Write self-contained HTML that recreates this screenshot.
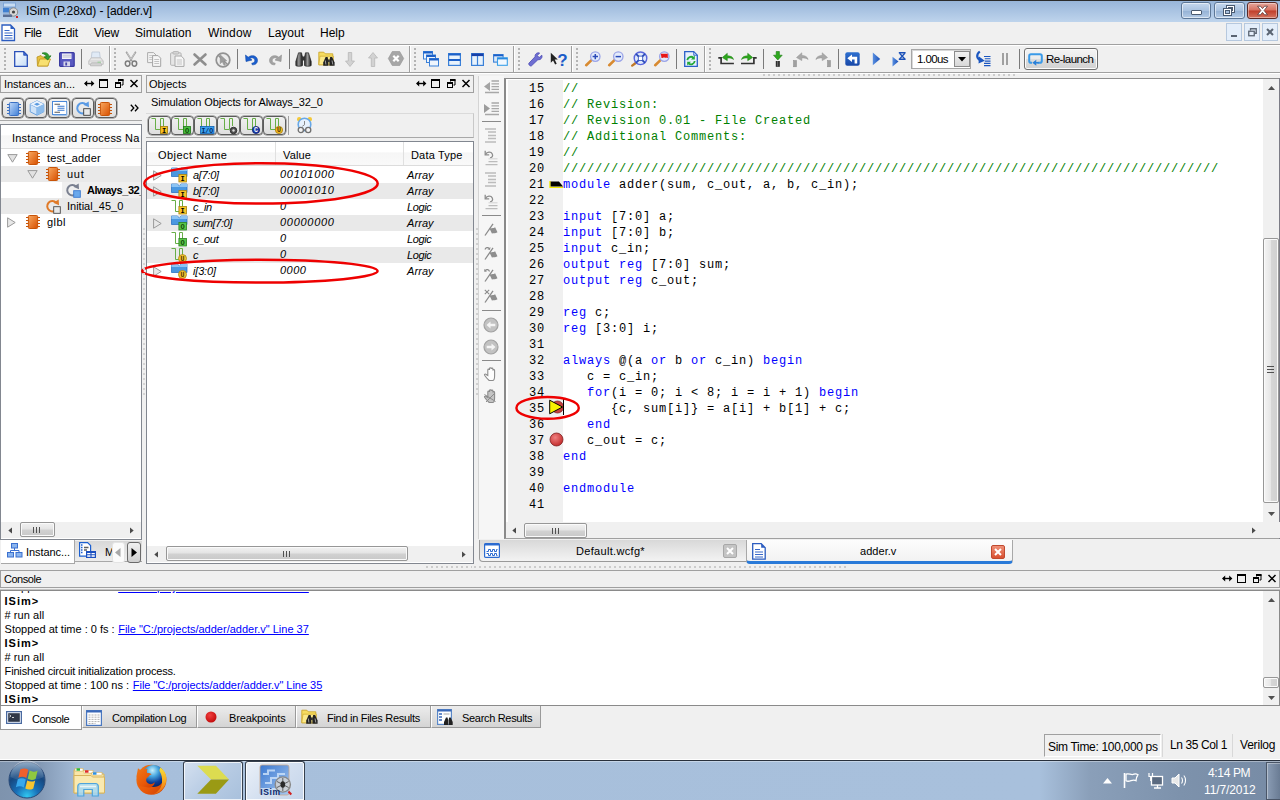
<!DOCTYPE html>
<html><head><meta charset="utf-8"><title>ISim (P.28xd) - [adder.v]</title>
<style>
*{box-sizing:border-box;margin:0;padding:0}
html,body{width:1280px;height:800px;overflow:hidden}
body{position:relative;background:#f0f0f0;font-family:"Liberation Sans",sans-serif;font-size:11px;color:#000}
.a{position:absolute}
.t{position:absolute;white-space:nowrap;line-height:14px;height:14px;font-size:11px}
svg{position:absolute;overflow:visible}
.menu{font-size:12px;top:26px}
.box{position:absolute;border:1px solid #a0a0a0}
.sep{position:absolute;width:1px;height:20px;top:49px;background:#7a7a7a}
.grip{position:absolute;top:48px;width:2px;height:22px;background:repeating-linear-gradient(#b4b4b4 0,#b4b4b4 2px,transparent 2px,transparent 4px)}
.tbend{position:absolute;top:46px;height:26px;width:2px;border-left:1px solid #a0a0a0;border-right:1px solid #fff}
.tb{position:absolute;border:1px solid #5c5c5c;border-radius:4px;background:linear-gradient(#f0f0f0,#e8e8e8 50%,#dedede);box-shadow:0 0 0 .5px #777}
.code{font-family:"Liberation Mono",monospace;font-size:12px;letter-spacing:.8px;line-height:16px;height:16px;white-space:pre;position:absolute;color:#000}
.k{color:#0000ff}.c{color:#008000}
.it{font-style:italic}
.lnk{color:#0000ff;text-decoration:underline}
.b{font-weight:bold}
</style></head><body>

<!-- 10_title.html -->
<div class="a" style="left:0;top:0;width:1280px;height:22px;background:linear-gradient(#98b5d9 0,#a9c3e2 45%,#bed4ec 100%);border-top:1px solid #2b2b2b"></div>
<svg style="left:2px;top:2px" width="17" height="17" viewBox="0 0 17 17"><rect x="1" y="0.5" width="13" height="11" fill="#7fa6d8"/><rect x="2" y="1.5" width="11" height="3" fill="#c8dcf2"/><rect x="1" y="6" width="6" height="4" fill="#3f7fd0"/><circle cx="11.5" cy="10" r="4.2" fill="#d8d8d8" stroke="#8a8a8a"/><circle cx="11.5" cy="10" r="1.6" fill="#444"/><rect x="1" y="12.5" width="9" height="2.5" fill="#5a6f95"/><rect x="14" y="14" width="2" height="2" fill="#d02020"/></svg>
<div class="t" style="letter-spacing:-0.07px;left:26px;top:4px;font-size:12px">ISim (P.28xd) - [adder.v]</div>
<!-- window buttons -->
<div class="a" style="left:1181px;top:2px;width:30px;height:17px;border:1px solid #5d7797;border-radius:3px;background:linear-gradient(#c6d8ee,#a9c2e0 50%,#94b1d4 51%,#b4cbe6);box-shadow:inset 0 0 0 1px rgba(255,255,255,.55)"></div>
<div class="a" style="left:1191px;top:10px;width:11px;height:5px;background:#fff;border:1px solid #4a5a70;border-radius:1px"></div>
<div class="a" style="left:1214px;top:2px;width:31px;height:17px;border:1px solid #5d7797;border-radius:3px;background:linear-gradient(#c6d8ee,#a9c2e0 50%,#94b1d4 51%,#b4cbe6);box-shadow:inset 0 0 0 1px rgba(255,255,255,.55)"></div>
<svg style="left:1223px;top:5px" width="13" height="11" viewBox="0 0 13 11"><rect x="3.5" y="0.5" width="8" height="7" fill="#fff" stroke="#4a5a70"/><rect x="5.5" y="2.5" width="4" height="3" fill="#a9c2e0" stroke="#4a5a70"/><rect x="0.5" y="3.5" width="8" height="7" fill="#fff" stroke="#4a5a70"/><rect x="2.5" y="5.5" width="4" height="3" fill="#a9c2e0" stroke="#4a5a70"/></svg>
<div class="a" style="left:1247px;top:2px;width:31px;height:17px;border:1px solid #5b2a26;border-radius:3px;background:linear-gradient(#e5a79c,#d6705f 48%,#c03e2a 52%,#d5745f);box-shadow:inset 0 0 0 1px rgba(255,255,255,.4)"></div>
<svg style="left:1256px;top:5px" width="13" height="11" viewBox="0 0 13 11"><path d="M1.5 1.2h3l2 2.4 2-2.4h3l-3.4 4.3 3.4 4.3h-3l-2-2.4-2 2.4h-3l3.4-4.3z" fill="#fff" stroke="#5b3a3a" stroke-width=".8"/></svg>

<!-- menubar -->
<div class="a" style="left:0;top:22px;width:1280px;height:22px;background:#f0f0f0"></div>
<svg style="left:1px;top:24px" width="15" height="18" viewBox="0 0 15 18"><path d="M1 1h8.5l4 4v11.5H1z" fill="#fff" stroke="#2b5cc0" stroke-width="1.3"/><path d="M9.5 1v4h4z" fill="#2b5cc0"/><path d="M3.5 6.5h5M3.5 9h8M3.5 11.5h8M3.5 14h8" stroke="#3868c8" stroke-width="1.2"/></svg>
<div class="t menu" style="letter-spacing:-0.46px;left:24px">File</div>
<div class="t menu" style="letter-spacing:-0.22px;left:58px">Edit</div>
<div class="t menu" style="letter-spacing:-0.20px;left:94px">View</div>
<div class="t menu" style="letter-spacing:0.05px;left:135px">Simulation</div>
<div class="t menu" style="letter-spacing:0.14px;left:208px">Window</div>
<div class="t menu" style="left:268px">Layout</div>
<div class="t menu" style="left:320px">Help</div>
<!-- mdi buttons -->
<div class="a" style="left:1226px;top:23px;width:16px;height:18px;background:#e4eefa;border:1px solid #b6c8de"></div>
<div class="a" style="left:1231px;top:35px;width:6px;height:2px;background:#5a6472"></div>
<div class="a" style="left:1244px;top:23px;width:16px;height:18px;background:#e4eefa;border:1px solid #b6c8de"></div>
<svg style="left:1248px;top:28px" width="9" height="9" viewBox="0 0 9 9"><path d="M2.5 2.5V.75h5.75v4.5H6.5" fill="none" stroke="#5a6472" stroke-width="1.3"/><rect x=".75" y="3.25" width="5.5" height="4.5" fill="none" stroke="#5a6472" stroke-width="1.3"/></svg>
<div class="a" style="left:1262px;top:23px;width:16px;height:18px;background:#e4eefa;border:1px solid #b6c8de"></div>
<svg style="left:1266px;top:28px" width="8" height="8" viewBox="0 0 8 8"><path d="M1 1l6 6M7 1l-6 6" stroke="#5a6472" stroke-width="2"/></svg>
<div class="a" style="left:0;top:44px;width:1280px;height:1px;background:#a0a0a0"></div>
<div class="a" style="left:0;top:45px;width:1280px;height:1px;background:#fff"></div>

<!-- 20_toolbar.html -->
<!-- toolbar frame -->
<div class="a" style="left:0;top:72px;width:1280px;height:1px;background:#a0a0a0"></div>
<div class="a" style="left:0;top:73px;width:1280px;height:1px;background:#fff"></div>
<div class="grip" style="left:4px"></div>
<div class="tbend" style="left:109px"></div>
<div class="grip" style="left:114px"></div>
<div class="tbend" style="left:409px"></div>
<div class="grip" style="left:414px"></div>
<div class="tbend" style="left:513px"></div>
<div class="grip" style="left:518px"></div>
<div class="tbend" style="left:571px"></div>
<div class="grip" style="left:576px"></div>
<div class="tbend" style="left:704px"></div>
<div class="grip" style="left:709px"></div>
<div class="sep" style="left:81px"></div>
<div class="sep" style="left:237px"></div>
<div class="sep" style="left:289px"></div>
<div class="sep" style="left:676px"></div>
<div class="sep" style="left:763px"></div>
<div class="sep" style="left:838px"></div>
<div class="sep" style="left:1019px"></div>

<!-- new -->
<svg style="left:14px;top:51px" width="14" height="16" viewBox="0 0 14 16"><defs><linearGradient id="gnew" x1="0" y1="0" x2="1" y2="1"><stop offset="0" stop-color="#fff"/><stop offset="1" stop-color="#c4dcf6"/></linearGradient></defs><path d="M.7.7h9l3.6 3.6v11H.7z" fill="url(#gnew)" stroke="#2a50b8" stroke-width="1.3"/><path d="M9.7.7v3.6h3.6z" fill="#3a66d0" stroke="#2a50b8" stroke-width=".8"/></svg>
<!-- open -->
<svg style="left:36px;top:51px" width="16" height="16" viewBox="0 0 16 16"><path d="M1 6l4-1.5 1.5 1.5h5.5v9H1.5z" fill="#e8c040" stroke="#b8901c" stroke-width=".8"/><path d="M1.5 15l2.3-7h10.7l-2.8 7z" fill="#f8e070" stroke="#c09820" stroke-width=".8"/><path d="M6 2.2c4-1.4 6.5.3 6.8 3l2.2-.4-3.2 4.2-3.6-3 2.2-.4c-.3-1.600-2-2.600-4.400-3.400z" fill="#30a030" stroke="#187018" stroke-width=".7"/></svg>
<!-- save -->
<svg style="left:59px;top:52px" width="16" height="15" viewBox="0 0 16 15"><rect x=".6" y=".6" width="14.600" height="13.800" rx="1" fill="#5858c0" stroke="#3a3aa0" stroke-width="1.2"/><rect x="3" y="1.500" width="9.500" height="5.500" fill="#f4f4fa"/><path d="M3.500 3.200h8.500M3.500 5h8.500" stroke="#b0b0c8" stroke-width=".8"/><rect x="4.500" y="9.500" width="6.500" height="4.800" fill="#d8d8ec"/><rect x="6.300" y="10.500" width="1.800" height="3" fill="#4848a8"/></svg>
<!-- print (disabled) -->
<svg style="left:88px;top:51px" width="16" height="16" viewBox="0 0 16 16" opacity=".75"><path d="M4 1h7.500l.8 6.500H3.200z" fill="#dbe9f8" stroke="#a8b8cc" stroke-width=".8"/><path d="M.8 10l2.500-3.200h9.400l2.500 3.200v3.300H.8z" fill="#e4e4e4" stroke="#a4a4a4" stroke-width=".8"/><path d="M.8 10h14.400" stroke="#bcbcbc" stroke-width=".8"/><path d="M2.500 13.300l1-1.500h9l1 1.500v1.500h-11z" fill="#c8c8c8" stroke="#9c9c9c" stroke-width=".7"/><path d="M9.500 11.200h3.500" stroke="#7ec27e" stroke-width="1.100"/></svg>

<!-- cut -->
<svg style="left:124px;top:51px" width="14" height="16" viewBox="0 0 14 16"><path d="M2.200.8L8 10M11.800.8L6 10" stroke="#9a9a9a" stroke-width="1.600" fill="none"/><path d="M3 1.500L7 8.500 11 1.500" stroke="#d8d8d8" stroke-width=".7" fill="none"/><ellipse cx="3.600" cy="12.600" rx="2.300" ry="2.600" fill="none" stroke="#7c7c7c" stroke-width="1.500"/><ellipse cx="10.400" cy="12.600" rx="2.300" ry="2.600" fill="none" stroke="#7c7c7c" stroke-width="1.500"/></svg>
<!-- copy -->
<svg style="left:147px;top:52px" width="15" height="15" viewBox="0 0 15 15"><path d="M.6.600h6l2.400 2.400v7.600H.6z" fill="#f2f2f2" stroke="#adadad" stroke-width="1"/><path d="M2.200 3.500h4M2.200 5.500h5M2.200 7.500h5" stroke="#c4c4c4" stroke-width=".9"/><path d="M5.600 3.600h5.500l2.600 2.600v8.200H5.600z" fill="#f6f6f6" stroke="#a4a4a4" stroke-width="1"/><path d="M7.300 7.500h4.800M7.300 9.500h4.800M7.300 11.500h4.800" stroke="#bcbcbc" stroke-width=".9"/></svg>
<!-- paste -->
<svg style="left:170px;top:51px" width="15" height="16" viewBox="0 0 15 16"><rect x=".6" y="1.800" width="10.500" height="12.500" rx="1" fill="#e6e6e6" stroke="#b4b4b4"/><rect x="3" y=".5" width="5.600" height="2.600" rx=".8" fill="#d4d4d4" stroke="#b0b0b0" stroke-width=".8"/><path d="M5 5h6.200l2.800 2.800v7.600H5z" fill="#f6f6f6" stroke="#a8a8a8" stroke-width="1"/><path d="M6.800 9h5.200M6.800 11h5.200M6.800 13h5.200" stroke="#bebebe" stroke-width=".9"/></svg>
<!-- delete X -->
<svg style="left:193px;top:53px" width="14" height="13" viewBox="0 0 14 13"><path d="M1.500 1.500L12.500 11.500M12.500 1.500L1.500 11.500" stroke="#8e8e8e" stroke-width="2.600" stroke-linecap="round"/></svg>
<!-- stop pointer -->
<svg style="left:215px;top:52px" width="16" height="16" viewBox="0 0 16 16"><circle cx="8" cy="8" r="6.800" fill="#ececec" stroke="#929292" stroke-width="1.700"/><path d="M3.200 3.200l9.600 9.600" stroke="#929292" stroke-width="1.500"/><path d="M5.200 2.800l6.600 6-3 .2 1.700 3.600-1.500.7-1.700-3.600-2.100 2z" fill="#9c9c9c" stroke="#8a8a8a" stroke-width=".5"/></svg>
<!-- undo -->
<svg style="left:245px;top:54px" width="14" height="11" viewBox="0 0 14 11"><path d="M.5 1l.5 6.500 6-1.500-2.200-1.400c1.800-1.500 4.600-.9 5 1.300.4 2-1.200 3.300-3 3.300l.4 1.600c3.500.3 5.800-2.300 5.200-5.300C11.700 1.800 7 .3 3.200 3.200z" fill="#1a5fd0" stroke="#1048a8" stroke-width=".6"/></svg>
<!-- redo -->
<svg style="left:268px;top:54px" width="14" height="11" viewBox="0 0 14 11"><path d="M13.500 1l-.5 6.500-6-1.500 2.200-1.400c-1.800-1.500-4.600-.9-5 1.300-.4 2 1.200 3.300 3 3.300l-.4 1.600c-3.500.3-5.800-2.300-5.200-5.300C2.300 1.800 7 .3 10.800 3.200z" fill="#a2a2a2" stroke="#8e8e8e" stroke-width=".6"/></svg>
<!-- binoculars -->
<svg style="left:295px;top:52px" width="17" height="15" viewBox="0 0 17 15"><defs><linearGradient id="gbin" x1="0" y1="0" x2="1" y2="0"><stop offset="0" stop-color="#222"/><stop offset=".45" stop-color="#999"/><stop offset="1" stop-color="#111"/></linearGradient></defs><path d="M3.500.8h3l1 4.500v8.200c0 1-6.700 1-6.700 0v-4z" fill="url(#gbin)" stroke="#111" stroke-width=".6"/><path d="M13.500.8h-3l-1 4.500v8.200c0 1 6.700 1 6.700 0v-4z" fill="url(#gbin)" stroke="#111" stroke-width=".6"/><rect x="6.800" y="4.500" width="3.400" height="4" fill="#333"/></svg>
<!-- folder binoculars -->
<svg style="left:318px;top:51px" width="17" height="16" viewBox="0 0 17 16"><path d="M.8 1.200h5l1.500 1.600h7.500v11H.8z" fill="#f6dc60" stroke="#c8a020" stroke-width=".8"/><path d="M.8 13.800l1.200-8.600h13.600l-.8 8.600z" fill="#fbe98a" stroke="#c8a020" stroke-width=".6"/><path d="M7.600 6h2l.8 3.500v5.300H5.200v-3.300z" fill="#222"/><path d="M14.200 6h-2l-.8 3.500v5.300h5.200v-3.300z" fill="#222"/><path d="M7.300 9.500l.6 4M14 9.500l.8 4" stroke="#aaa" stroke-width=".9"/><rect x="9.800" y="8.500" width="2" height="2.500" fill="#333"/></svg>
<!-- down arrow (disabled) -->
<svg style="left:345px;top:52px" width="10" height="15" viewBox="0 0 10 15"><path d="M3.300.5h3.400v8.500h2.800L5 14.500.5 9h2.800z" fill="#d2d2d2" stroke="#b8b8b8" stroke-width=".8"/></svg>
<!-- up arrow (disabled) -->
<svg style="left:368px;top:52px" width="10" height="15" viewBox="0 0 10 15"><path d="M3.300 14.500h3.400V6h2.800L5 .5.500 6h2.800z" fill="#d2d2d2" stroke="#b8b8b8" stroke-width=".8"/></svg>
<!-- hex X -->
<svg style="left:388px;top:51px" width="16" height="15" viewBox="0 0 16 15"><path d="M4.300.5h7.400l4 7-4 7H4.300l-4-7z" fill="#a6a6a6" stroke="#929292" stroke-width=".6"/><path d="M5.300 4.800l5.400 5.400M10.700 4.800l-5.400 5.400" stroke="#fff" stroke-width="2.200"/></svg>

<!-- cascade -->
<svg style="left:423px;top:51px" width="16" height="16" viewBox="0 0 16 16"><g fill="#eef5fd" stroke="#3a80d8" stroke-width="1"><rect x=".5" y=".5" width="9" height="7.500"/><rect x="3.500" y="4" width="9" height="7.500"/><rect x="6.500" y="7.500" width="9" height="7.500"/></g><path d="M.5 1.500h9M3.500 5h9M6.500 8.500h9" stroke="#1c60c8" stroke-width="2"/></svg>
<!-- tile horiz -->
<svg style="left:448px;top:53px" width="13" height="13" viewBox="0 0 13 13"><rect x=".6" y=".6" width="11.800" height="11.800" fill="#e8f2fc" stroke="#3a80d8" stroke-width="1.200"/><path d="M.6 1.500h11.800M.6 7h11.800" stroke="#1c60c8" stroke-width="2"/></svg>
<!-- tile vert -->
<svg style="left:471px;top:53px" width="13" height="13" viewBox="0 0 13 13"><rect x=".6" y=".6" width="11.800" height="11.800" fill="#e8f2fc" stroke="#3a80d8" stroke-width="1.200"/><path d="M.6 1.800h11.800" stroke="#1840a8" stroke-width="2.600"/><path d="M6.500 3v9.500" stroke="#3a80d8" stroke-width="1.200"/></svg>
<!-- overlap -->
<svg style="left:493px;top:54px" width="15" height="12" viewBox="0 0 15 12"><rect x=".6" y=".6" width="9.500" height="7.500" fill="#dce9f8" stroke="#3a80d8" stroke-width="1.100"/><path d="M.6 1.400h9.500" stroke="#1c60c8" stroke-width="1.800"/><rect x="4.500" y="3.800" width="9.800" height="7.500" fill="#f2f8fe" stroke="#3aa0e8" stroke-width="1.100"/><path d="M4.500 4.600h9.800" stroke="#2a88e0" stroke-width="1.600"/></svg>
<!-- wrench -->
<svg style="left:528px;top:52px" width="15" height="15" viewBox="0 0 15 15"><path d="M13.800 3.200l-2.600 2.300-1.900-1.900 2.300-2.600c-2.200-.8-4.800.8-4.600 3.800L.9 11.200c-.9 1 1.500 3.600 2.600 2.600L9.900 7.700c3 .4 4.800-2.200 3.900-4.500z" fill="#6f6fd2" stroke="#4a4ab4" stroke-width=".8"/></svg>
<!-- arrow ? -->
<svg style="left:550px;top:52px" width="16" height="15" viewBox="0 0 16 15"><path d="M.8.800l7 6.600-3.100.2 2 4.200-1.600.8-2-4.200L.8 10.800z" fill="#222"/><text x="7.300" y="13.800" font-family="Liberation Sans,sans-serif" font-weight="bold" font-size="17" fill="#1c5cc8">?</text></svg>

<!-- zoom in -->
<svg style="left:585px;top:51px" width="16" height="16" viewBox="0 0 16 16"><path d="M1.200 14.200l5.800-5.600" stroke="#d88a30" stroke-width="2.600" stroke-linecap="round"/><circle cx="10.300" cy="5.600" r="4.700" fill="#e4ebfb" stroke="#9aa4e8" stroke-width="1.300"/><path d="M7.600 5.600h5.400M10.300 2.900v5.400" stroke="#2a4ab8" stroke-width="1.500"/></svg>
<!-- zoom out -->
<svg style="left:608px;top:51px" width="16" height="16" viewBox="0 0 16 16"><path d="M1.200 14.200l5.800-5.600" stroke="#d88a30" stroke-width="2.600" stroke-linecap="round"/><circle cx="10.300" cy="5.600" r="4.700" fill="#e4ebfb" stroke="#9aa4e8" stroke-width="1.300"/><path d="M7.600 5.600h5.400" stroke="#2a4ab8" stroke-width="1.500"/></svg>
<!-- zoom fit -->
<svg style="left:631px;top:51px" width="17" height="16" viewBox="0 0 17 16"><path d="M1.200 14.600l3.500-2.600" stroke="#c07828" stroke-width="2.400" stroke-linecap="round"/><circle cx="9.500" cy="7.300" r="6.300" fill="#dfe8fb" stroke="#5a66dc" stroke-width="1.400"/><path d="M5 2.800l9 9M14 2.800l-9 9" stroke="#2a4ab8" stroke-width="1.700"/><rect x="7.300" y="5.100" width="4.400" height="4.400" fill="#fff" stroke="#2a4ab8" stroke-width=".8"/></svg>
<!-- zoom red -->
<svg style="left:654px;top:51px" width="16" height="16" viewBox="0 0 16 16"><path d="M1.200 14.200l5.800-5.600" stroke="#d88a30" stroke-width="2.600" stroke-linecap="round"/><circle cx="10.300" cy="5.600" r="4.700" fill="#e4ebfb" stroke="#9aa4e8" stroke-width="1.300"/><path d="M6.800 2.800h7v4.200h-1l-.7-.8-.7.800-.7-.8-.7.800-.7-.8-.7.800h-1.100z" fill="#e81818"/></svg>
<!-- refresh doc -->
<svg style="left:684px;top:51px" width="14" height="16" viewBox="0 0 14 16"><path d="M.7.700h9l3.600 3.600v11H.7z" fill="#e6f0fc" stroke="#2a60c8" stroke-width="1.300"/><path d="M9.700.7v3.600h3.600z" fill="#b8d0f0" stroke="#2a60c8" stroke-width=".8"/><path d="M3.300 9.200a3.700 3.700 0 0 1 6.200-2.400" fill="none" stroke="#22a838" stroke-width="1.800"/><path d="M10.800 4.600v3.800H7z" fill="#22a838"/><path d="M10.700 10a3.700 3.700 0 0 1-6.200 2.400" fill="none" stroke="#22a838" stroke-width="1.800"/><path d="M3.200 14.600v-3.800H7z" fill="#22a838"/></svg>

<!-- tray-out -->
<svg style="left:718px;top:53px" width="17" height="12" viewBox="0 0 17 12"><path d="M.3 4.800h2.800v5.700h12.800" fill="none" stroke="#333" stroke-width="1.700"/><path d="M4.300 4.500L9.300.3v2.500c3 0 5.700 1 6.200 3.700-1.600-1.400-3.800-1.600-6.200-1.500V7.700z" fill="#2ea81e" stroke="#1a7a10" stroke-width=".5"/></svg>
<!-- tray-in -->
<svg style="left:740px;top:53px" width="17" height="12" viewBox="0 0 17 12"><path d="M16.700 4.800h-2.800v5.700H1" fill="none" stroke="#333" stroke-width="1.700"/><path d="M12.700 4.500L7.700.3v2.500c-3 0-5.700 1-6.200 3.700 1.600-1.400 3.800-1.600 6.200-1.500V7.700z" fill="#2ea81e" stroke="#1a7a10" stroke-width=".5"/></svg>
<!-- step down -->
<svg style="left:773px;top:51px" width="10" height="16" viewBox="0 0 10 16"><path d="M3.200.5h3.200v3.700h2.800L4.800 9 .5 4.200h2.700z" fill="#2ea81e" stroke="#1a7a10" stroke-width=".6"/><rect x="2.800" y="10" width="4" height="5.800" fill="#222"/><rect x="3.800" y="10" width="1.500" height="5.800" fill="#666"/></svg>
<!-- gray undo step -->
<svg style="left:793px;top:52px" width="16" height="15" viewBox="0 0 16 15"><rect x=".5" y="8.500" width="3" height="6.300" fill="#a0a0a0" stroke="#8a8a8a" stroke-width=".5"/><path d="M3.500 5.500L8.800.8v2.700c3 0 5.800 1.200 6.300 4-1.600-1.500-3.900-1.600-6.300-1.600v2.700z" fill="#a8a8a8" stroke="#929292" stroke-width=".5"/></svg>
<!-- gray redo step -->
<svg style="left:815px;top:52px" width="16" height="15" viewBox="0 0 16 15"><rect x="12.500" y="8.500" width="3" height="6.300" fill="#a0a0a0" stroke="#8a8a8a" stroke-width=".5"/><path d="M12.500 5.500L7.200.8v2.700c-3 0-5.800 1.200-6.300 4 1.600-1.500 3.900-1.600 6.300-1.600v2.700z" fill="#a8a8a8" stroke="#929292" stroke-width=".5"/></svg>
<!-- restart blue box -->
<svg style="left:845px;top:52px" width="15" height="14" viewBox="0 0 15 14"><defs><linearGradient id="gblu" x1="0" y1="0" x2="0" y2="1"><stop offset="0" stop-color="#2e70d0"/><stop offset="1" stop-color="#1848a8"/></linearGradient></defs><rect x=".3" y=".3" width="14.400" height="13.400" rx="2" fill="url(#gblu)"/><path d="M2.300 6.200L7 2.500v2.300h5.200v6.700H9.600V7.600H7v2.300z" fill="#fff"/></svg>
<!-- play -->
<svg style="left:872px;top:52px" width="9" height="14" viewBox="0 0 9 14"><defs><linearGradient id="gpl" x1="0" y1="0" x2="1" y2="0"><stop offset="0" stop-color="#5a90e0"/><stop offset="1" stop-color="#1a50b8"/></linearGradient></defs><path d="M.8.500l7.400 6.400-7.400 6.400z" fill="url(#gpl)"/></svg>
<!-- play hourglass -->
<svg style="left:892px;top:52px" width="15" height="15" viewBox="0 0 15 15"><path d="M.5 4.800l6 4.800-6 4.900z" fill="url(#gpl)"/><path d="M6.800.8h6.800M6.800 7.200h6.800" stroke="#1a50b8" stroke-width="1.400"/><path d="M7.600 1.200l5.200 5.800M12.800 1.200L7.600 7" stroke="#1a50b8" stroke-width="1.300"/></svg>
<!-- combo -->
<div class="a" style="left:911px;top:49px;width:60px;height:20px;background:#fff;border:1px solid #a6a6a6;box-shadow:inset 1px 1px 0 #d8d8d8"></div>
<div class="t" style="letter-spacing:-0.59px;left:917px;top:52px;font-size:11.500px">1.00us</div>
<div class="a" style="left:954px;top:51px;width:16px;height:16px;background:linear-gradient(#f2f2f2,#d8d8d8);border:1px solid #8c8c8c"></div>
<svg style="left:958px;top:57px" width="8" height="5" viewBox="0 0 8 5"><path d="M0 0h8L4 4.500z" fill="#000"/></svg>
<!-- step lines -->
<svg style="left:975px;top:51px" width="16" height="15" viewBox="0 0 16 15"><path d="M4.800.5C1 3.500 1.500 7.800 5.500 9.200" fill="none" stroke="#1a56c0" stroke-width="2.200"/><path d="M4 5.600l5.800 4.200-6.300 2.800z" fill="#1a56c0"/><path d="M9 5.500h6.500M9.800 7.800h5.700M9.800 10.100h5.700M9 12.400h6.500M9 14.600h6.500" stroke="#1a56c0" stroke-width="1.100"/></svg>
<!-- pause -->
<div class="a" style="left:1002px;top:53px;width:2px;height:12px;background:#a0a0a0"></div>
<div class="a" style="left:1006px;top:53px;width:2px;height:12px;background:#a0a0a0"></div>
<!-- relaunch -->
<div class="a" style="left:1024px;top:48px;width:74px;height:22px;border:1px solid #707070;border-radius:3px;background:linear-gradient(#f4f4f4,#ebebeb 48%,#dcdcdc 52%,#d2d2d2);box-shadow:inset 0 0 0 1px #fbfbfb"></div>
<svg style="left:1028px;top:53px" width="15" height="13" viewBox="0 0 15 13"><path d="M9.500 9.700H12c1.200 0 1.800-.6 1.800-1.800V3c0-1.200-.6-1.800-1.800-1.800H3C1.800 1.200 1.200 1.800 1.200 3v4.900c0 1.200.6 1.800 1.800 1.800h1" fill="none" stroke="#3a9ae8" stroke-width="2"/><path d="M4.300 9.700l4-3v2.200h2.400v1.600H8.300v2.200z" fill="#2a80d8"/></svg>
<div class="t" style="letter-spacing:-0.56px;left:1046px;top:52px;font-size:11.500px">Re-launch</div>
<!-- splitter dots below toolbar -->
<div class="a" style="left:763px;top:74px;width:252px;height:2px;background:repeating-linear-gradient(90deg,#cccccc 0,#cccccc 2px,transparent 2px,transparent 5px)"></div>

<!-- 30_panels.html -->
<div class="box" style="left:0;top:75px;width:142px;height:18px;border-color:#a0a0a0"></div>
<div class="t" style="letter-spacing:-0.04px;left:4px;top:77px">Instances an...</div>
<svg style="left:84px;top:79px" width="55" height="10" viewBox="0 0 55 10"><path d="M1 4.500h8" stroke="#000" stroke-width="1.400"/><path d="M0 4.500l3.200-3v6zM10.400 4.500l-3.200-3v6z" fill="#000"/><rect x="15" y="0" width="9" height="2" fill="#000"/><rect x="15.500" y=".5" width="8" height="8" fill="none" stroke="#000" stroke-width="1"/><rect x="34" y="0" width="5.500" height="2" fill="#000"/><path d="M34.500 2.500V.5h4.500v5.500H37.500" fill="none" stroke="#000" stroke-width="1"/><rect x="31" y="3" width="6" height="2" fill="#000"/><rect x="31.500" y="3.500" width="5" height="5" fill="none" stroke="#000" stroke-width="1"/><path d="M46.500 1l7 7M53.500 1l-7 7" stroke="#000" stroke-width="1.500"/></svg>
<div class="a" style="left:0;top:120px;width:142px;height:1px;background:#a8a8a8"></div>
<div class="tb" style="left:2.0px;top:98px;width:22px;height:20px"></div>
<div class="tb" style="left:25.2px;top:98px;width:22px;height:20px"></div>
<div class="tb" style="left:48.4px;top:98px;width:22px;height:20px"></div>
<div class="tb" style="left:71.6px;top:98px;width:22px;height:20px"></div>
<div class="tb" style="left:94.8px;top:98px;width:22px;height:20px"></div>
<svg style="left:7px;top:102px" width="14" height="14" viewBox="0 0 14 14"><defs><linearGradient id="gcb" x1="0" y1="0" x2="1" y2="1"><stop offset="0" stop-color="#c0d8f8"/><stop offset="1" stop-color="#4080d8"/></linearGradient></defs><path d="M0 2.500h2.500M0 5.500h2.500M0 8.500h2.500M0 11.500h2.500M11.500 2.500h2.500M11.500 5.500h2.500M11.500 8.500h2.500M11.500 11.500h2.500" stroke="#3a70c4" stroke-width="1.100"/><rect x="2.400" y=".5" width="9.200" height="13" rx="1" fill="url(#gcb)" stroke="#3a70c4" stroke-width="1"/></svg>
<svg style="left:29px;top:100px" width="16" height="16" viewBox="0 0 16 16"><path d="M8 .8l6.800 3.400v7.600L8 15.200 1.200 11.800V4.200z" fill="#cfe3f8" stroke="#6aa2e0" stroke-width="1"/><path d="M1.200 4.200L8 7.600l6.800-3.400M8 7.600v7.600" fill="none" stroke="#6aa2e0" stroke-width="1"/><path d="M8 .8l6.800 3.400L8 7.600 1.200 4.200z" fill="#eaf3fd"/><path d="M8 7.600l6.800-3.400v7.600L8 15.200z" fill="#8cbcec"/><path d="M5 4.200l3-1.500 3 1.500-3 1.500z" fill="#5a9ae0"/></svg>
<svg style="left:52px;top:101px" width="15" height="14" viewBox="0 0 15 14"><rect x=".5" y=".5" width="14" height="13" fill="#fff" stroke="#4a88d8" stroke-width="1"/><path d="M14.800 1.500v12.800H1.500" fill="none" stroke="#9cc0ec" stroke-width="1"/><path d="M2.500 3.200h5.500M2.500 11.200h5.500" stroke="#585858" stroke-width="1.100"/><path d="M5.500 5.200h7M5.500 7.200h7M5.500 9.200h7" stroke="#3a78d0" stroke-width="1.100"/></svg>
<svg style="left:75px;top:101px" width="16" height="15" viewBox="0 0 16 15"><path d="M11.200 3.600A5.200 5.200 0 1 0 11.800 10" fill="none" stroke="#5a9ae4" stroke-width="2"/><path d="M8.300 3.800l5.400-3.300.3 5.800z" fill="#5a9ae4"/><rect x="8.700" y="7.700" width="6.600" height="6.600" fill="#e8e8e8" stroke="#3a3a3a" stroke-width=".9"/></svg>
<svg style="left:98px;top:102px" width="14" height="14" viewBox="0 0 14 14"><defs><linearGradient id="gco" x1="0" y1="0" x2="1" y2="1"><stop offset="0" stop-color="#f8a860"/><stop offset="1" stop-color="#d85000"/></linearGradient></defs><path d="M0 2.500h2.500M0 5.500h2.500M0 8.500h2.500M0 11.500h2.500M11.500 2.500h2.500M11.500 5.500h2.500M11.500 8.500h2.500M11.500 11.500h2.500" stroke="#c85408" stroke-width="1.100"/><rect x="2.400" y=".5" width="9.200" height="13" rx="1" fill="url(#gco)" stroke="#c85408" stroke-width="1"/></svg>
<svg style="left:130px;top:104px" width="9" height="8" viewBox="0 0 9 8"><path d="M.8.800l3 3.200-3 3.200M5 .8l3 3.200-3 3.200" fill="none" stroke="#000" stroke-width="1.300"/></svg>
<div class="box" style="left:0;top:124px;width:142px;height:416px;background:#fff;border-color:#828790"></div>
<div class="a" style="left:1px;top:125px;width:140px;height:24px;background:linear-gradient(#fff 0,#fff 45%,#f6f6f6 46%,#f9f9f9);border-bottom:1px solid #dcdcdc"></div>
<div class="t" style="letter-spacing:0.20px;left:12px;top:131px;width:129px;overflow:hidden">Instance and Process Na</div>
<div class="a" style="left:1px;top:166px;width:140px;height:16px;background:#e9e9e9"></div>
<div class="a" style="left:62px;top:182px;width:79px;height:16px;background:#efefef"></div>
<div class="a" style="left:1px;top:198px;width:140px;height:16px;background:#e9e9e9"></div>
<svg style="left:7px;top:154px" width="11" height="9" viewBox="0 0 11 9"><path d="M.8.600h9.400L5.500 8.200z" fill="#e2e2e2" stroke="#9a9a9a" stroke-width="1"/></svg>
<svg style="left:26px;top:151px" width="14" height="14" viewBox="0 0 14 14"><defs><linearGradient id="gc1" x1="0" y1="0" x2="1" y2="1"><stop offset="0" stop-color="#f8a860"/><stop offset="1" stop-color="#d85000"/></linearGradient></defs><path d="M0 2.500h2.500M0 5.500h2.500M0 8.500h2.500M0 11.500h2.500M11.500 2.500h2.500M11.500 5.500h2.500M11.500 8.500h2.500M11.500 11.500h2.500" stroke="#c85408" stroke-width="1.100"/><rect x="2.400" y=".5" width="9.200" height="13" rx="1" fill="url(#gc1)" stroke="#c85408" stroke-width="1"/></svg>
<div class="t" style="letter-spacing:0.18px;left:47px;top:151px">test_adder</div>
<svg style="left:27px;top:170px" width="11" height="9" viewBox="0 0 11 9"><path d="M.8.600h9.400L5.500 8.200z" fill="#e2e2e2" stroke="#9a9a9a" stroke-width="1"/></svg>
<svg style="left:46px;top:167px" width="14" height="14" viewBox="0 0 14 14"><defs><linearGradient id="gc2" x1="0" y1="0" x2="1" y2="1"><stop offset="0" stop-color="#f8a860"/><stop offset="1" stop-color="#d85000"/></linearGradient></defs><path d="M0 2.500h2.500M0 5.500h2.500M0 8.500h2.500M0 11.500h2.500M11.500 2.500h2.500M11.500 5.500h2.500M11.500 8.500h2.500M11.500 11.500h2.500" stroke="#c85408" stroke-width="1.100"/><rect x="2.400" y=".5" width="9.200" height="13" rx="1" fill="url(#gc2)" stroke="#c85408" stroke-width="1"/></svg>
<div class="t" style="letter-spacing:0.73px;left:67px;top:167px">uut</div>
<svg style="left:65px;top:183px" width="16" height="15" viewBox="0 0 16 15"><path d="M11.200 3.600A5.200 5.200 0 1 0 11.800 10" fill="none" stroke="#7a8090" stroke-width="2"/><path d="M8.300 3.800l5.400-3.300.3 5.800z" fill="#7a8090"/><rect x="8.700" y="7.700" width="6.600" height="6.600" fill="#6aa8ec" stroke="#3a78d0" stroke-width=".9"/></svg>
<div class="t b" style="letter-spacing:-0.45px;left:87px;top:183px;width:53.500px;overflow:hidden">Always_32_0</div>
<svg style="left:45px;top:199px" width="16" height="15" viewBox="0 0 16 15"><path d="M11.200 3.600A5.200 5.200 0 1 0 11.800 10" fill="none" stroke="#e07a28" stroke-width="2"/><path d="M8.300 3.800l5.400-3.300.3 5.800z" fill="#e07a28"/><rect x="8.700" y="7.700" width="6.600" height="6.600" fill="#e8e8e8" stroke="#484848" stroke-width=".9"/></svg>
<div class="t" style="left:67px;top:199px">Initial_45_0</div>
<svg style="left:7px;top:217px" width="9" height="11" viewBox="0 0 9 11"><path d="M.6.800v9.400L8.200 5.500z" fill="#e8e8e8" stroke="#9a9a9a" stroke-width="1"/></svg>
<svg style="left:26px;top:215px" width="14" height="14" viewBox="0 0 14 14"><defs><linearGradient id="gc3" x1="0" y1="0" x2="1" y2="1"><stop offset="0" stop-color="#f8a860"/><stop offset="1" stop-color="#d85000"/></linearGradient></defs><path d="M0 2.500h2.500M0 5.500h2.500M0 8.500h2.500M0 11.500h2.500M11.500 2.500h2.500M11.500 5.500h2.500M11.500 8.500h2.500M11.500 11.500h2.500" stroke="#c85408" stroke-width="1.100"/><rect x="2.400" y=".5" width="9.200" height="13" rx="1" fill="url(#gc3)" stroke="#c85408" stroke-width="1"/></svg>
<div class="t" style="letter-spacing:0.44px;left:47px;top:215px">glbl</div>
<div class="a" style="left:1px;top:522px;width:140px;height:16px;background:#f0f0f0"></div><svg style="left:8px;top:527px" width="4" height="7" viewBox="0 0 4 7"><path d="M4 .5v6L.3 3.500z" fill="#4a4a4a"/></svg><svg style="left:130px;top:527px" width="4" height="7" viewBox="0 0 4 7"><path d="M0 .5v6l3.700-3z" fill="#4a4a4a"/></svg><div class="a" style="left:20px;top:522px;width:35px;height:15px;border:1px solid #979797;border-radius:2px;background:linear-gradient(#f2f2f2,#e4e4e4 48%,#d2d2d2 52%,#c8c8c8);box-shadow:inset 0 0 0 1px #fafafa"></div><div class="a" style="left:33px;top:527px;width:7px;height:6px;background:repeating-linear-gradient(90deg,#505050 0,#505050 1px,transparent 1px,transparent 3px)"></div>
<div class="a" style="left:75px;top:541px;width:67px;height:21px;background:linear-gradient(#d8d8d8,#ededed);border-bottom:1px solid #a8a8a8"></div>
<div class="a" style="left:1px;top:540px;width:74px;height:24px;background:#fff;border-right:1px solid #a8a8a8;border-bottom:1px solid #a8a8a8"></div>
<svg style="left:7px;top:543px" width="16" height="15" viewBox="0 0 16 15"><g fill="#8ab4ee" stroke="#3a70d0" stroke-width="1"><rect x="4.500" y=".5" width="6" height="4.500"/><rect x=".5" y="9.500" width="6" height="4.500"/><rect x="9" y="9.500" width="6" height="4.500"/></g><path d="M7.500 5v2.500M3.500 9.500v-2h8.500v2" fill="none" stroke="#3a70d0" stroke-width="1"/></svg>
<div class="t" style="letter-spacing:-0.06px;left:26px;top:545px">Instanc...</div>
<svg style="left:79px;top:542px" width="17" height="16" viewBox="0 0 17 16"><path d="M.6.600h8l3 3v10.500h-11z" fill="#fff" stroke="#1c60d0" stroke-width="1.200"/><path d="M2 3h1.500M2 5.500h1.500M2 8h1.500M2 10.500h1.500" stroke="#1c60d0" stroke-width="1.300"/><path d="M5 5.500h4.500M5 8h3" stroke="#606060" stroke-width="1.300"/><rect x="7.600" y="9.600" width="8.800" height="5.800" fill="#fff" stroke="#1c50c0" stroke-width="1.200"/><path d="M7.600 10.400h8.800M12 10v5.500M7.600 12.800h8.800" stroke="#1c50c0" stroke-width="1.100"/></svg>
<div class="t" style="left:105px;top:545px">M</div>
<div class="a" style="left:112px;top:542px;width:13px;height:21px;background:#fbfbfb;border:1px solid #e4e4e4;border-radius:3px"></div>
<svg style="left:115px;top:548px" width="6" height="9" viewBox="0 0 6 9"><path d="M5.500 0v9L0 4.500z" fill="#a8a8a8"/></svg>
<div class="a" style="left:127px;top:542px;width:14px;height:21px;background:linear-gradient(#f0f0f0,#cfcfcf);border:1px solid #6a6a6a;border-radius:3px"></div>
<svg style="left:131px;top:548px" width="6" height="9" viewBox="0 0 6 9"><path d="M.5 0v9L6 4.500z" fill="#000"/></svg>
<div class="box" style="left:146px;top:75px;width:328px;height:18px;border-color:#a0a0a0"></div>
<div class="t" style="letter-spacing:0.03px;left:149px;top:77px">Objects</div>
<svg style="left:416px;top:79px" width="55" height="10" viewBox="0 0 55 10"><path d="M1 4.500h8" stroke="#000" stroke-width="1.400"/><path d="M0 4.500l3.200-3v6zM10.400 4.500l-3.200-3v6z" fill="#000"/><rect x="15" y="0" width="9" height="2" fill="#000"/><rect x="15.500" y=".5" width="8" height="8" fill="none" stroke="#000" stroke-width="1"/><rect x="34" y="0" width="5.500" height="2" fill="#000"/><path d="M34.500 2.500V.5h4.500v5.500H37.500" fill="none" stroke="#000" stroke-width="1"/><rect x="31" y="3" width="6" height="2" fill="#000"/><rect x="31.500" y="3.500" width="5" height="5" fill="none" stroke="#000" stroke-width="1"/><path d="M46.500 1l7 7M53.500 1l-7 7" stroke="#000" stroke-width="1.500"/></svg>
<div class="t" style="letter-spacing:-0.11px;left:151px;top:95px">Simulation Objects for Always_32_0</div>
<div class="a" style="left:146px;top:113px;width:328px;height:25px;border-top:1px solid #dadada;border-bottom:1px solid #a8a8a8;border-right:1px solid #c8c8c8"></div>
<div class="tb" style="left:148px;top:116px;width:23px;height:19px"></div>
<svg style="left:150px;top:117px" width="19" height="17" viewBox="0 0 19 17"><path d="M1.500 1.500H5.500V12.500H10.500V1.500H13.500V9" fill="none" stroke="#68ae48" stroke-width="1"/><rect x="10.500" y="9.500" width="7" height="7" fill="#f8c020" stroke="#a07808" stroke-width=".8"/><text x="14" y="15.5" font-family="Liberation Mono,monospace" font-weight="bold" font-size="7" fill="#000" text-anchor="middle">I</text></svg>
<div class="tb" style="left:171px;top:116px;width:23px;height:19px"></div>
<svg style="left:173px;top:117px" width="19" height="17" viewBox="0 0 19 17"><path d="M1.500 1.500H5.500V12.500H10.500V1.500H13.500V9" fill="none" stroke="#68ae48" stroke-width="1"/><rect x="10.500" y="9.500" width="7" height="7" fill="#48c040" stroke="#207818" stroke-width=".8"/><text x="14" y="15.5" font-family="Liberation Mono,monospace" font-weight="bold" font-size="7" fill="#104808" text-anchor="middle">O</text></svg>
<div class="tb" style="left:194px;top:116px;width:23px;height:19px"></div>
<svg style="left:196px;top:117px" width="19" height="17" viewBox="0 0 19 17"><path d="M1.500 1.500H5.500V12.500H10.500V1.500H13.500V9" fill="none" stroke="#68ae48" stroke-width="1"/><rect x="4.500" y="9.500" width="13.500" height="7" fill="#38a0f0" stroke="#1060b0" stroke-width=".8"/><text x="11.3" y="15.9" font-family="Liberation Mono,monospace" font-weight="bold" font-size="6.5" fill="#042a60" text-anchor="middle">I/O</text></svg>
<div class="tb" style="left:217px;top:116px;width:23px;height:19px"></div>
<svg style="left:219px;top:117px" width="19" height="17" viewBox="0 0 19 17"><path d="M1.500 1.500H5.500V12.500H10.500V1.500H13.500V9" fill="none" stroke="#68ae48" stroke-width="1"/><circle cx="14.500" cy="13.500" r="3.300" fill="#505050" stroke="#222" stroke-width=".8"/><circle cx="14.500" cy="13.500" r="1.200" fill="#ddd"/></svg>
<div class="tb" style="left:240px;top:116px;width:23px;height:19px"></div>
<svg style="left:242px;top:117px" width="19" height="17" viewBox="0 0 19 17"><path d="M1.500 1.500H5.500V12.500H10.500V1.500H13.500V9" fill="none" stroke="#68ae48" stroke-width="1"/><circle cx="14" cy="13" r="3.600" fill="#1c3ca8" stroke="#0c2070" stroke-width=".8"/><text x="14" y="15.3" font-family="Liberation Mono,monospace" font-weight="bold" font-size="6.5" fill="#fff" text-anchor="middle">C</text></svg>
<div class="tb" style="left:263px;top:116px;width:23px;height:19px"></div>
<svg style="left:265px;top:117px" width="19" height="17" viewBox="0 0 19 17"><path d="M1.500 1.500H5.500V12.500H10.500V1.500H13.500V9" fill="none" stroke="#68ae48" stroke-width="1"/><circle cx="14" cy="13" r="3.600" fill="#f4c028" stroke="#a87808" stroke-width=".8"/><text x="14" y="15.3" font-family="Liberation Mono,monospace" font-weight="bold" font-size="6.5" fill="#503000" text-anchor="middle">U</text></svg>
<div class="a" style="left:288px;top:116px;width:1px;height:19px;background:#a0a0a0"></div>
<svg style="left:296px;top:116px" width="17" height="18" viewBox="0 0 17 18"><circle cx="3.200" cy="3.200" r="2.200" fill="#f4c838"/><circle cx="13.800" cy="3.200" r="2.200" fill="#f4c838"/><circle cx="8.500" cy="8.500" r="6.300" fill="#e8f2fc" stroke="#68a8e8" stroke-width="1.600"/><path d="M8.500 5v3.800l-2.200 1.500" fill="none" stroke="#8a8a8a" stroke-width="1"/><circle cx="4.800" cy="14" r="2.600" fill="#f4f4f4" stroke="#707070" stroke-width="1.300"/><circle cx="12.200" cy="14" r="2.600" fill="#f4f4f4" stroke="#707070" stroke-width="1.300"/><path d="M7.400 14h2.200" stroke="#707070" stroke-width="1.300"/></svg>
<div class="box" style="left:146px;top:141px;width:328px;height:423px;background:#fff;border-color:#828790"></div>
<div class="a" style="left:147px;top:142px;width:326px;height:24px;background:linear-gradient(#fff 0,#fff 45%,#f6f6f6 46%,#f9f9f9);border-bottom:1px solid #dcdcdc"></div>
<div class="a" style="left:275px;top:142px;width:1px;height:23px;background:#e0e0e0"></div>
<div class="a" style="left:403px;top:142px;width:1px;height:23px;background:#e0e0e0"></div>
<div class="t" style="letter-spacing:0.47px;left:158px;top:148px">Object Name</div>
<div class="t" style="letter-spacing:0.13px;left:283px;top:148px">Value</div>
<div class="t" style="letter-spacing:0.18px;left:411px;top:148px">Data Type</div>
<svg style="left:153px;top:170px" width="9" height="11" viewBox="0 0 9 11"><path d="M.6.800v9.400L8.200 5.500z" fill="#e8e8e8" stroke="#9a9a9a" stroke-width="1"/></svg>
<svg style="left:171px;top:167px" width="16" height="16" viewBox="0 0 16 16"><path d="M.5 1h6l1.800 2.500L10 1h6v8.500H.5z" fill="#4a98e0" stroke="#1c68c0" stroke-width=".7"/><path d="M.5 1h6l1.800 2.500L10 1h6v3H.5z" fill="#8cc4f4"/><rect x="7.900" y="7.400" width="7.600" height="7.600" fill="#f8c428" stroke="#a88410" stroke-width=".8"/><text x="11.7" y="13.8" font-family="Liberation Mono,monospace" font-weight="bold" font-size="7" fill="#000" text-anchor="middle">I</text></svg>
<div class="t it" style="letter-spacing:-0.27px;left:193px;top:168px">a[7:0]</div>
<div class="t it" style="letter-spacing:0.72px;left:280px;top:167px">00101000</div>
<div class="t it" style="letter-spacing:0.08px;left:407px;top:168px">Array</div>
<div class="a" style="left:147px;top:183px;width:326px;height:16px;background:#e9e9e9"></div>
<svg style="left:153px;top:186px" width="9" height="11" viewBox="0 0 9 11"><path d="M.6.800v9.400L8.200 5.500z" fill="#e8e8e8" stroke="#9a9a9a" stroke-width="1"/></svg>
<svg style="left:171px;top:183px" width="16" height="16" viewBox="0 0 16 16"><path d="M.5 1h6l1.800 2.500L10 1h6v8.500H.5z" fill="#4a98e0" stroke="#1c68c0" stroke-width=".7"/><path d="M.5 1h6l1.800 2.500L10 1h6v3H.5z" fill="#8cc4f4"/><rect x="7.900" y="7.400" width="7.600" height="7.600" fill="#f8c428" stroke="#a88410" stroke-width=".8"/><text x="11.7" y="13.8" font-family="Liberation Mono,monospace" font-weight="bold" font-size="7" fill="#000" text-anchor="middle">I</text></svg>
<div class="t it" style="letter-spacing:-0.27px;left:193px;top:184px">b[7:0]</div>
<div class="t it" style="letter-spacing:0.72px;left:280px;top:183px">00001010</div>
<div class="t it" style="letter-spacing:0.08px;left:407px;top:184px">Array</div>
<svg style="left:171px;top:199px" width="16" height="16" viewBox="0 0 16 16"><path d="M.5 1.500H4.500V12.500H8.500V1.500H11.500V8" fill="none" stroke="#68ae48" stroke-width="1"/><rect x="7.900" y="7.400" width="7.600" height="7.600" fill="#f8c428" stroke="#a88410" stroke-width=".8"/><text x="11.7" y="13.8" font-family="Liberation Mono,monospace" font-weight="bold" font-size="7" fill="#000" text-anchor="middle">I</text></svg>
<div class="t it" style="letter-spacing:-0.32px;left:193px;top:200px">c_in</div>
<div class="t it" style="letter-spacing:-0.42px;left:280px;top:199px">0</div>
<div class="t it" style="letter-spacing:-0.36px;left:407px;top:200px">Logic</div>
<div class="a" style="left:147px;top:215px;width:326px;height:16px;background:#e9e9e9"></div>
<svg style="left:153px;top:218px" width="9" height="11" viewBox="0 0 9 11"><path d="M.6.800v9.400L8.200 5.500z" fill="#e8e8e8" stroke="#9a9a9a" stroke-width="1"/></svg>
<svg style="left:171px;top:215px" width="16" height="16" viewBox="0 0 16 16"><path d="M.5 1h6l1.800 2.500L10 1h6v8.500H.5z" fill="#4a98e0" stroke="#1c68c0" stroke-width=".7"/><path d="M.5 1h6l1.800 2.500L10 1h6v3H.5z" fill="#8cc4f4"/><rect x="7.900" y="7.400" width="7.600" height="7.600" fill="#58c448" stroke="#2c8420" stroke-width=".8"/><text x="11.7" y="13.8" font-family="Liberation Mono,monospace" font-weight="bold" font-size="7" fill="#104808" text-anchor="middle">O</text></svg>
<div class="t it" style="letter-spacing:-0.41px;left:193px;top:216px">sum[7:0]</div>
<div class="t it" style="letter-spacing:0.72px;left:280px;top:215px">00000000</div>
<div class="t it" style="letter-spacing:0.08px;left:407px;top:216px">Array</div>
<svg style="left:171px;top:231px" width="16" height="16" viewBox="0 0 16 16"><path d="M.5 1.500H4.500V12.500H8.500V1.500H11.500V8" fill="none" stroke="#68ae48" stroke-width="1"/><rect x="7.900" y="7.400" width="7.600" height="7.600" fill="#58c448" stroke="#2c8420" stroke-width=".8"/><text x="11.7" y="13.8" font-family="Liberation Mono,monospace" font-weight="bold" font-size="7" fill="#104808" text-anchor="middle">O</text></svg>
<div class="t it" style="letter-spacing:-0.30px;left:193px;top:232px">c_out</div>
<div class="t it" style="letter-spacing:-0.42px;left:280px;top:231px">0</div>
<div class="t it" style="letter-spacing:-0.36px;left:407px;top:232px">Logic</div>
<div class="a" style="left:147px;top:247px;width:326px;height:16px;background:#e9e9e9"></div>
<svg style="left:171px;top:247px" width="16" height="16" viewBox="0 0 16 16"><path d="M.5 1.500H4.500V12.500H8.500V1.500H11.500V8" fill="none" stroke="#68ae48" stroke-width="1"/><circle cx="11.500" cy="11.500" r="4" fill="#f4c430" stroke="#a88410" stroke-width=".8"/><text x="11.5" y="13.8" font-family="Liberation Mono,monospace" font-weight="bold" font-size="6.5" fill="#503000" text-anchor="middle">U</text></svg>
<div class="t it" style="letter-spacing:-0.60px;left:193px;top:248px">c</div>
<div class="t it" style="letter-spacing:-0.42px;left:280px;top:247px">0</div>
<div class="t it" style="letter-spacing:-0.36px;left:407px;top:248px">Logic</div>
<svg style="left:153px;top:266px" width="9" height="11" viewBox="0 0 9 11"><path d="M.6.800v9.400L8.200 5.500z" fill="#e8e8e8" stroke="#9a9a9a" stroke-width="1"/></svg>
<svg style="left:171px;top:263px" width="16" height="16" viewBox="0 0 16 16"><path d="M.5 1h6l1.800 2.500L10 1h6v8.500H.5z" fill="#4a98e0" stroke="#1c68c0" stroke-width=".7"/><path d="M.5 1h6l1.800 2.500L10 1h6v3H.5z" fill="#8cc4f4"/><circle cx="11.500" cy="11.500" r="4" fill="#f4c430" stroke="#a88410" stroke-width=".8"/><text x="11.5" y="13.8" font-family="Liberation Mono,monospace" font-weight="bold" font-size="6.5" fill="#503000" text-anchor="middle">U</text></svg>
<div class="t it" style="letter-spacing:-0.18px;left:193px;top:264px">i[3:0]</div>
<div class="t it" style="letter-spacing:0.45px;left:280px;top:263px">0000</div>
<div class="t it" style="letter-spacing:0.08px;left:407px;top:264px">Array</div>
<div class="a" style="left:147px;top:546px;width:326px;height:16px;background:#f0f0f0"></div><svg style="left:154px;top:551px" width="4" height="7" viewBox="0 0 4 7"><path d="M4 .5v6L.3 3.500z" fill="#4a4a4a"/></svg><svg style="left:462px;top:551px" width="4" height="7" viewBox="0 0 4 7"><path d="M0 .5v6l3.700-3z" fill="#4a4a4a"/></svg><div class="a" style="left:166px;top:546px;width:242px;height:15px;border:1px solid #979797;border-radius:2px;background:linear-gradient(#f2f2f2,#e4e4e4 48%,#d2d2d2 52%,#c8c8c8);box-shadow:inset 0 0 0 1px #fafafa"></div><div class="a" style="left:283px;top:551px;width:7px;height:6px;background:repeating-linear-gradient(90deg,#505050 0,#505050 1px,transparent 1px,transparent 3px)"></div>
<svg style="left:140px;top:160px" width="245" height="130" viewBox="0 0 245 130"><ellipse cx="121" cy="23.400" rx="116.700" ry="20.200" fill="none" stroke="#ee0000" stroke-width="2.500"/><ellipse cx="119.900" cy="111.100" rx="117.700" ry="11.400" fill="none" stroke="#ee0000" stroke-width="2.500"/></svg>
<div class="a" style="left:426px;top:566px;width:46px;height:2px;background:repeating-linear-gradient(90deg,#cccccc 0,#cccccc 2px,transparent 2px,transparent 5px)"></div>
<div class="a" style="left:143px;top:228px;width:2px;height:168px;background:repeating-linear-gradient(#d4d4d4 0,#d4d4d4 2px,transparent 2px,transparent 5px)"></div>

<!-- 40_editor.html -->
<div class="a" style="left:478px;top:76px;width:26px;height:463px;background:#f6f6f6;border-left:1px solid #d4d4d4"></div>
<svg style="left:484px;top:80px" width="15" height="14" viewBox="0 0 15 14"><path d="M0 6.500L6 2v9z" fill="#a4a4a4"/><path d="M7.500 1h7.500M7.500 3.800h7.500M7.500 6.600h7.500M7.500 9.400h7.500M1 12.500h14" stroke="#a8a8a8" stroke-width="1.300"/></svg>
<svg style="left:484px;top:102px" width="15" height="14" viewBox="0 0 15 14"><path d="M0 2v9l6-4.500z" fill="#9c9c9c"/><path d="M7.500 1h7.500M7.500 3.800h7.500M7.500 6.600h7.500M7.500 9.400h7.500M1 12.500h14" stroke="#a8a8a8" stroke-width="1.300"/></svg>
<div class="a" style="left:482px;top:121px;width:19px;height:1px;background:#8a8a8a"></div>
<svg style="left:485px;top:128px" width="12" height="15" viewBox="0 0 12 15"><path d="M0 1h11M3 4h8M3 7.500h8M3 10.500h8M0 14h11" stroke="#bcbcbc" stroke-width="1.300"/></svg>
<svg style="left:484px;top:150px" width="14" height="16" viewBox="0 0 14 16"><path d="M1.200.8v4h4" fill="none" stroke="#8e8e8e" stroke-width="1.300"/><path d="M1.500 4.600c1.500-3 5.500-3.300 6.800-.6.900 2-.3 3.600-2.300 3.800" fill="none" stroke="#8e8e8e" stroke-width="1.300"/><path d="M4.500 8.800h9" stroke="#d8d8d8" stroke-width="1.200"/><path d="M4.500 11.600h9M1.500 14.600h12" stroke="#bcbcbc" stroke-width="1.300"/></svg>
<svg style="left:485px;top:172px" width="12" height="15" viewBox="0 0 12 15"><path d="M0 1h11M3 4h8M3 7.500h8M3 10.500h8M0 14h11" stroke="#bcbcbc" stroke-width="1.300"/></svg>
<svg style="left:484px;top:194px" width="14" height="16" viewBox="0 0 14 16"><path d="M1.200.8v4h4" fill="none" stroke="#8e8e8e" stroke-width="1.300"/><path d="M1.500 4.600c1.500-3 5.500-3.300 6.800-.6.900 2-.3 3.600-2.300 3.800" fill="none" stroke="#8e8e8e" stroke-width="1.300"/><path d="M4.500 8.800h9" stroke="#d8d8d8" stroke-width="1.200"/><path d="M4.500 11.600h9M1.500 14.600h12" stroke="#bcbcbc" stroke-width="1.300"/></svg>
<div class="a" style="left:482px;top:215px;width:19px;height:1px;background:#8a8a8a"></div>
<svg style="left:484px;top:223px" width="14" height="13" viewBox="0 0 14 13"><path d="M1 12.500L9 .8" stroke="#8a8a8a" stroke-width="1.300"/><path d="M5.500 5.500c2-.8 3.500.3 5.600-1.200l2.400 5c-2.200 1.500-3.700.4-5.600 1.300z" fill="#8e8e8e"/></svg>
<svg style="left:484px;top:246px" width="14" height="14" viewBox="0 0 14 14"><path d="M1 3.500c.5-2 3-2.600 4.300-1" fill="none" stroke="#8a8a8a" stroke-width="1.100"/><path d="M6.500 1l-.5 3-2.600-.8z" fill="#8a8a8a"/><g transform="translate(0,1)"><path d="M1 12.500L9 .8" stroke="#8a8a8a" stroke-width="1.300"/><path d="M5.500 5.500c2-.8 3.500.3 5.600-1.200l2.400 5c-2.200 1.500-3.700.4-5.600 1.300z" fill="#8e8e8e"/></g></svg>
<svg style="left:484px;top:268px" width="14" height="14" viewBox="0 0 14 14"><path d="M5.500 3.500c-.5-2-3-2.600-4.300-1" fill="none" stroke="#8a8a8a" stroke-width="1.100"/><path d="M0 1l.5 3 2.600-.8z" fill="#8a8a8a"/><g transform="translate(0,1)"><path d="M1 12.500L9 .8" stroke="#8a8a8a" stroke-width="1.300"/><path d="M5.500 5.500c2-.8 3.500.3 5.600-1.200l2.400 5c-2.200 1.500-3.700.4-5.600 1.300z" fill="#8e8e8e"/></g></svg>
<svg style="left:484px;top:289px" width="14" height="14" viewBox="0 0 14 14"><path d="M.8.800l4.400 4.400M5.200.8L.8 5.200" stroke="#8a8a8a" stroke-width="1.100"/><g transform="translate(0,1)"><path d="M1 12.500L9 .8" stroke="#8a8a8a" stroke-width="1.300"/><path d="M5.500 5.500c2-.8 3.500.3 5.600-1.200l2.400 5c-2.200 1.500-3.700.4-5.600 1.300z" fill="#8e8e8e"/></g></svg>
<div class="a" style="left:482px;top:310px;width:19px;height:1px;background:#8a8a8a"></div>
<svg style="left:483px;top:317px" width="16" height="16" viewBox="0 0 16 16"><circle cx="8" cy="8" r="7" fill="#c2c2c2" stroke="#a2a2a2" stroke-width="1.200"/><path d="M3.500 8l4-3.600v2.300h4.800v2.600H7.500v2.300z" fill="#f4f4f4"/></svg>
<svg style="left:483px;top:339px" width="16" height="16" viewBox="0 0 16 16"><circle cx="8" cy="8" r="7" fill="#c2c2c2" stroke="#a2a2a2" stroke-width="1.200"/><path d="M12.500 8l-4-3.600v2.300H3.700v2.600h4.800v2.300z" fill="#f4f4f4"/></svg>
<div class="a" style="left:482px;top:360px;width:19px;height:1px;background:#8a8a8a"></div>
<svg style="left:484px;top:367px" width="13" height="15" viewBox="0 0 13 15"><path d="M3.800 8.500V3c0-1.200 1.700-1.200 1.700 0V1.600c0-1.200 1.700-1.200 1.700 0V2c0-1.200 1.700-1.200 1.700 0v1.500c0-1.200 1.700-1.200 1.700 0V9c0 2.500-1 4.500-2 4.500H5.200C4 12.500 2 10.500.6 8.300c-.6-1.100.9-1.700 1.600-.8z" fill="#fdfdfd" stroke="#8c8c8c" stroke-width="1.100"/></svg>
<svg style="left:484px;top:389px" width="13" height="15" viewBox="0 0 13 15"><path d="M3.800 8.500V3c0-1.200 1.700-1.200 1.700 0V1.600c0-1.200 1.700-1.200 1.700 0V2c0-1.200 1.700-1.200 1.700 0v1.500c0-1.200 1.700-1.200 1.700 0V9c0 2.500-1 4.500-2 4.500H5.200C4 12.500 2 10.500.6 8.300c-.6-1.100.9-1.700 1.600-.8z" fill="#c4c4c4" stroke="#8c8c8c" stroke-width="1.100"/><path d="M.5 5.500l11 7M2 13l9-9" stroke="#8c8c8c" stroke-width="1"/></svg>
<div class="a" style="left:476px;top:228px;width:2px;height:168px;background:repeating-linear-gradient(#d0d0d0 0,#d0d0d0 2px,transparent 2px,transparent 5px)"></div>
<div class="a" style="left:504px;top:78px;width:776px;height:461px;background:#fff;border-left:2px solid #8a8a8a;border-top:1px solid #8e8e8e;border-bottom:1px solid #a0a0a0"></div>
<div class="a" style="left:508px;top:80px;width:55px;height:442px;background:#f0f0f0"></div>
<div class="code" style="left:529px;top:81px">15</div>
<div class="code" style="left:563px;top:81px"><span class="c">//</span></div>
<div class="code" style="left:529px;top:97px">16</div>
<div class="code" style="left:563px;top:97px"><span class="c">// Revision:</span></div>
<div class="code" style="left:529px;top:113px">17</div>
<div class="code" style="left:563px;top:113px"><span class="c">// Revision 0.01 - File Created</span></div>
<div class="code" style="left:529px;top:129px">18</div>
<div class="code" style="left:563px;top:129px"><span class="c">// Additional Comments:</span></div>
<div class="code" style="left:529px;top:145px">19</div>
<div class="code" style="left:563px;top:145px"><span class="c">//</span></div>
<div class="code" style="left:529px;top:161px">20</div>
<div class="code" style="left:563px;top:161px"><span class="c">//////////////////////////////////////////////////////////////////////////////////</span></div>
<div class="code" style="left:529px;top:177px">21</div>
<div class="code" style="left:563px;top:177px"><span class="k">module</span> adder(sum, c_out, a, b, c_in);</div>
<div class="code" style="left:529px;top:193px">22</div>
<div class="code" style="left:529px;top:209px">23</div>
<div class="code" style="left:563px;top:209px"><span class="k">input</span> [7:0] a;</div>
<div class="code" style="left:529px;top:225px">24</div>
<div class="code" style="left:563px;top:225px"><span class="k">input</span> [7:0] b;</div>
<div class="code" style="left:529px;top:241px">25</div>
<div class="code" style="left:563px;top:241px"><span class="k">input</span> c_in;</div>
<div class="code" style="left:529px;top:257px">26</div>
<div class="code" style="left:563px;top:257px"><span class="k">output reg</span> [7:0] sum;</div>
<div class="code" style="left:529px;top:273px">27</div>
<div class="code" style="left:563px;top:273px"><span class="k">output reg</span> c_out;</div>
<div class="code" style="left:529px;top:289px">28</div>
<div class="code" style="left:529px;top:305px">29</div>
<div class="code" style="left:563px;top:305px"><span class="k">reg</span> c;</div>
<div class="code" style="left:529px;top:321px">30</div>
<div class="code" style="left:563px;top:321px"><span class="k">reg</span> [3:0] i;</div>
<div class="code" style="left:529px;top:337px">31</div>
<div class="code" style="left:529px;top:353px">32</div>
<div class="code" style="left:563px;top:353px"><span class="k">always</span> @(a <span class="k">or</span> b <span class="k">or</span> c_in) <span class="k">begin</span></div>
<div class="code" style="left:529px;top:369px">33</div>
<div class="code" style="left:563px;top:369px">   c = c_in;</div>
<div class="code" style="left:529px;top:385px">34</div>
<div class="code" style="left:563px;top:385px">   <span class="k">for</span>(i = 0; i &lt; 8; i = i + 1) <span class="k">begin</span></div>
<div class="code" style="left:529px;top:401px">35</div>
<div class="code" style="left:563px;top:401px">      {c, sum[i]} = a[i] + b[1] + c;</div>
<div class="code" style="left:529px;top:417px">36</div>
<div class="code" style="left:563px;top:417px">   <span class="k">end</span></div>
<div class="code" style="left:529px;top:433px">37</div>
<div class="code" style="left:563px;top:433px">   c_out = c;</div>
<div class="code" style="left:529px;top:449px">38</div>
<div class="code" style="left:563px;top:449px"><span class="k">end</span></div>
<div class="code" style="left:529px;top:465px">39</div>
<div class="code" style="left:529px;top:481px">40</div>
<div class="code" style="left:563px;top:481px"><span class="k">endmodule</span></div>
<div class="code" style="left:529px;top:497px">41</div>
<svg style="left:550px;top:181px" width="13" height="6" viewBox="0 0 13 6"><path d="M0 0v6.400h13" fill="none" stroke="#f0e800" stroke-width="1.400"/><path d="M.6 .5h8.400l4 5H.6z" fill="#000"/></svg>
<svg style="left:549px;top:399px" width="15" height="16" viewBox="0 0 15 16"><circle cx="8.500" cy="8" r="6" fill="#c84040" stroke="#802020" stroke-width=".8"/><path d="M.7 1.200v13.600L13.500 8z" fill="#f8f000" stroke="#000" stroke-width="1"/><path d="M14.500 0v16" stroke="#000" stroke-width="1"/></svg>
<svg style="left:549px;top:432px" width="15" height="15" viewBox="0 0 15 15"><defs><radialGradient id="gbp" cx=".4" cy=".35" r=".7"><stop offset="0" stop-color="#f08080"/><stop offset="1" stop-color="#c02828"/></radialGradient></defs><circle cx="7.500" cy="7.500" r="6.500" fill="url(#gbp)" stroke="#802020" stroke-width=".8"/></svg>
<svg style="left:512px;top:394px" width="72" height="28" viewBox="0 0 72 28"><ellipse cx="35.600" cy="13.900" rx="31.200" ry="10.900" fill="none" stroke="#ee0000" stroke-width="2.400"/></svg>
<div class="a" style="left:1263px;top:79px;width:16px;height:443px;background:#f0f0f0"></div>
<div class="a" style="left:1279px;top:78px;width:1px;height:461px;background:#7c7c86"></div>
<svg style="left:1268px;top:86px" width="7" height="4" viewBox="0 0 7 4"><path d="M0 4h7L3.500 0z" fill="#505050"/></svg>
<svg style="left:1268px;top:512px" width="7" height="4" viewBox="0 0 7 4"><path d="M0 0h7L3.500 4z" fill="#505050"/></svg>
<div class="a" style="left:1263px;top:238px;width:16px;height:265px;border:1px solid #979797;border-radius:2px;background:linear-gradient(90deg,#f4f4f4,#e6e6e6 48%,#d6d6d6 52%,#d0d0d0);box-shadow:inset 0 0 0 1px #fafafa"></div>
<div class="a" style="left:1267px;top:366px;width:7px;height:8px;background:repeating-linear-gradient(#505050 0,#505050 1px,transparent 1px,transparent 3px)"></div>
<div class="a" style="left:506px;top:522px;width:757px;height:16px;background:#f0f0f0"></div>
<div class="a" style="left:1263px;top:522px;width:17px;height:16px;background:#f0f0f0"></div>
<svg style="left:512px;top:527px" width="4" height="7" viewBox="0 0 4 7"><path d="M4 .5v6L.3 3.500z" fill="#4a4a4a"/></svg>
<svg style="left:1252px;top:527px" width="4" height="7" viewBox="0 0 4 7"><path d="M0 .5v6l3.700-3z" fill="#4a4a4a"/></svg>
<div class="a" style="left:524px;top:523px;width:63px;height:15px;border:1px solid #979797;border-radius:2px;background:linear-gradient(#f2f2f2,#e4e4e4 48%,#d2d2d2 52%,#c8c8c8);box-shadow:inset 0 0 0 1px #fafafa"></div>
<div class="a" style="left:552px;top:528px;width:7px;height:6px;background:repeating-linear-gradient(90deg,#505050 0,#505050 1px,transparent 1px,transparent 3px)"></div>
<div class="a" style="left:479px;top:540px;width:268px;height:22px;border:1px solid #9a9a9a;border-top:none;border-radius:0 0 0 4px;background:linear-gradient(#d8d8d8,#e6e6e6 50%,#f3f3f3)"></div>
<svg style="left:484px;top:543px" width="16" height="15" viewBox="0 0 16 15"><rect x=".6" y=".6" width="14.800" height="13.800" rx="1" fill="#fff" stroke="#2a6ad0" stroke-width="1.200"/><path d="M.6 1.500h14.800" stroke="#2a6ad0" stroke-width="2"/><path d="M2.500 8.500h2v-2h2v2h2v-2h2v2h2v-2h1M2.500 10.500h2v2h2v-2h2v2h2v-2h2v2h1" fill="none" stroke="#2a6ad0" stroke-width="1"/></svg>
<div class="t" style="letter-spacing:0.32px;left:576px;top:544px">Default.wcfg*</div>
<div class="a" style="left:723px;top:544px;width:14px;height:14px;border:1px solid #a8a8a8;border-radius:2px;background:#c4c4c4"></div>
<svg style="left:726px;top:547px" width="8" height="8" viewBox="0 0 8 8"><path d="M1 1l6 6M7 1L1 7" stroke="#fff" stroke-width="2"/></svg>
<div class="a" style="left:746px;top:540px;width:267px;height:24px;border:1px solid #a8a8a8;border-top:none;border-bottom:3px solid #2a7ad8;border-radius:0 0 4px 4px;background:linear-gradient(#fdfdfd,#f2f2f2)"></div>
<svg style="left:752px;top:543px" width="14" height="17" viewBox="0 0 14 17"><path d="M.7.700h8.500l4 4v11.500H.7z" fill="#fff" stroke="#2b5cc0" stroke-width="1.300"/><path d="M9.200.7v4h4z" fill="#2b5cc0"/><path d="M3 6.500h5M3 9h8M3 11.500h8M3 14h8" stroke="#3868c8" stroke-width="1.200"/></svg>
<div class="t" style="letter-spacing:0.04px;left:860px;top:544px">adder.v</div>
<div class="a" style="left:991px;top:545px;width:14px;height:14px;border:1px solid #c04a30;border-radius:2px;background:linear-gradient(#f09078,#d85030)"></div>
<svg style="left:994px;top:548px" width="8" height="8" viewBox="0 0 8 8"><path d="M1 1l6 6M7 1L1 7" stroke="#fff" stroke-width="2"/></svg>
<div class="a" style="left:474px;top:566px;width:375px;height:2px;background:repeating-linear-gradient(90deg,#cccccc 0,#cccccc 2px,transparent 2px,transparent 5px)"></div>

<!-- 50_console.html -->
<div class="box" style="left:0;top:570px;width:1280px;height:18px;border-color:#a0a0a0"></div>
<div class="t" style="letter-spacing:-0.47px;left:4px;top:572px">Console</div>
<svg style="left:1222px;top:574px" width="55" height="10" viewBox="0 0 55 10"><path d="M1 4.500h8" stroke="#000" stroke-width="1.400"/><path d="M0 4.500l3.200-3v6zM10.400 4.500l-3.200-3v6z" fill="#000"/><rect x="15" y="0" width="9" height="2" fill="#000"/><rect x="15.500" y=".5" width="8" height="8" fill="none" stroke="#000" stroke-width="1"/><rect x="34" y="0" width="5.500" height="2" fill="#000"/><path d="M34.500 2.500V.5h4.500v5.500H37.500" fill="none" stroke="#000" stroke-width="1"/><rect x="31" y="3" width="6" height="2" fill="#000"/><rect x="31.500" y="3.500" width="5" height="5" fill="none" stroke="#000" stroke-width="1"/><path d="M46.500 1l7 7M53.500 1l-7 7" stroke="#000" stroke-width="1.500"/></svg>
<div class="a" style="left:0;top:589px;width:1280px;height:1px;background:#c4c4c4"></div>
<div class="a" style="left:0;top:590px;width:1280px;height:116px;background:#fff;border:1px solid #8a8a8a"></div>
<div class="a" style="left:1px;top:591px;width:1262px;height:3px;overflow:hidden"><div class="t" style="left:3.6px;top:-11px">Stopped at time : 0 fs :</div><div class="t lnk" style="left:117.2px;top:-11px">File "C:/projects/adder/adder.v" Line 37</div></div>
<div class="t b" style="letter-spacing:0.97px;left:4.6px;top:594px">ISim&gt;</div>
<div class="t " style="letter-spacing:0.05px;left:4.6px;top:608px"># run all</div>
<div class="t " style="left:4.6px;top:622px">Stopped at time : 0 fs :</div>
<div class="t lnk" style="left:118.2px;top:622px">File "C:/projects/adder/adder.v" Line 37</div>
<div class="t b" style="letter-spacing:0.97px;left:4.6px;top:636px">ISim&gt;</div>
<div class="t " style="letter-spacing:0.05px;left:4.6px;top:650px"># run all</div>
<div class="t " style="letter-spacing:-0.17px;left:4.6px;top:664px">Finished circuit initialization process.</div>
<div class="t " style="letter-spacing:-0.04px;left:4.6px;top:678px">Stopped at time : 100 ns :</div>
<div class="t lnk" style="letter-spacing:-0.03px;left:132.8px;top:678px">File "C:/projects/adder/adder.v" Line 35</div>
<div class="t b" style="letter-spacing:0.97px;left:4.6px;top:692px">ISim&gt;</div>
<div class="a" style="left:1263px;top:591px;width:16px;height:114px;background:#f0f0f0"></div>
<svg style="left:1268px;top:598px" width="7" height="4" viewBox="0 0 7 4"><path d="M0 4h7L3.500 0z" fill="#505050"/></svg>
<svg style="left:1268px;top:696px" width="7" height="4" viewBox="0 0 7 4"><path d="M0 0h7L3.500 4z" fill="#505050"/></svg>
<div class="a" style="left:1263px;top:677px;width:16px;height:11px;border:1px solid #979797;border-radius:2px;background:linear-gradient(90deg,#f4f4f4,#e6e6e6 48%,#d6d6d6 52%,#d0d0d0);box-shadow:inset 0 0 0 1px #fafafa"></div>
<div class="a" style="left:82px;top:706px;width:115px;height:22px;border:1px solid #9a9a9a;border-top:none;border-left-color:#fff;background:linear-gradient(#ececec,#e0e0e0 50%,#d4d4d4)"></div>
<div class="t" style="letter-spacing:-0.35px;left:112px;top:711px">Compilation Log</div>
<div class="a" style="left:197px;top:706px;width:99px;height:22px;border:1px solid #9a9a9a;border-top:none;border-left-color:#fff;background:linear-gradient(#ececec,#e0e0e0 50%,#d4d4d4)"></div>
<div class="t" style="letter-spacing:-0.14px;left:229px;top:711px">Breakpoints</div>
<div class="a" style="left:296px;top:706px;width:135px;height:22px;border:1px solid #9a9a9a;border-top:none;border-left-color:#fff;background:linear-gradient(#ececec,#e0e0e0 50%,#d4d4d4)"></div>
<div class="t" style="letter-spacing:-0.29px;left:327px;top:711px">Find in Files Results</div>
<div class="a" style="left:431px;top:706px;width:110px;height:22px;border:1px solid #9a9a9a;border-top:none;border-left-color:#fff;background:linear-gradient(#ececec,#e0e0e0 50%,#d4d4d4)"></div>
<div class="t" style="letter-spacing:-0.31px;left:462px;top:711px">Search Results</div>
<div class="a" style="left:0;top:706px;width:82px;height:24px;background:#fff;border:1px solid #9a9a9a;border-top:none"></div>
<svg style="left:6px;top:711px" width="16" height="13" viewBox="0 0 16 13"><rect x=".6" y=".6" width="14.800" height="11.800" fill="#e8eef8" stroke="#4a6aa0" stroke-width="1.200"/><rect x="2.200" y="2.200" width="11.600" height="8.600" fill="#303848"/><path d="M3.500 4l1.500 1-1.500 1M6 6.500h2" stroke="#fff" stroke-width=".8" fill="none"/></svg>
<div class="t" style="letter-spacing:-0.47px;left:32px;top:712px">Console</div>
<svg style="left:86px;top:710px" width="16" height="16" viewBox="0 0 16 16"><rect x=".6" y=".6" width="14.800" height="14.800" fill="#fff" stroke="#4a78c0" stroke-width="1.200"/><path d="M.6 1.500h14.800" stroke="#3a68b8" stroke-width="2"/><path d="M2.500 5h11M2.500 7.200h11M2.500 9.400h11M2.500 11.600h11M2.500 13.500h7" stroke="#a8a8a8" stroke-width=".9" stroke-dasharray="2 1"/></svg>
<svg style="left:205px;top:711px" width="12" height="12" viewBox="0 0 12 12"><defs><radialGradient id="gbp2" cx=".4" cy=".35" r=".7"><stop offset="0" stop-color="#f04040"/><stop offset="1" stop-color="#c00808"/></radialGradient></defs><circle cx="6" cy="6" r="5.500" fill="url(#gbp2)"/></svg>
<svg style="left:301px;top:709px" width="17" height="16" viewBox="0 0 17 16"><path d="M.8 1.200h5l1.500 1.600h7.500v11H.8z" fill="#f6dc60" stroke="#c8a020" stroke-width=".8"/><path d="M.8 13.800l1.200-8.600h13.600l-.8 8.600z" fill="#fbe98a" stroke="#c8a020" stroke-width=".6"/><path d="M7.600 6h2l.8 3.500v5.300H5.200v-3.300z" fill="#222"/><path d="M14.200 6h-2l-.8 3.500v5.300h5.200v-3.300z" fill="#222"/><path d="M7.300 9.500l.6 4M14 9.500l.8 4" stroke="#aaa" stroke-width=".9"/><rect x="9.800" y="8.500" width="2" height="2.500" fill="#333"/></svg>
<svg style="left:437px;top:709px" width="16" height="17" viewBox="0 0 16 17"><rect x=".6" y=".6" width="13.800" height="14.800" fill="#fff" stroke="#5a88c8" stroke-width="1.200"/><path d="M.6 1.500h13.800" stroke="#3a68b8" stroke-width="2"/><path d="M2 5h3M2 8h3M2 11h3" stroke="#3a68b8" stroke-width="1.400"/><path d="M6.500 5h6" stroke="#a8a8a8" stroke-width="1"/><path d="M9 8.500h1.500l.6 2.500v5H7v-3zM13.700 8.500h-1.500l-.6 2.500v5h4.100v-3z" fill="#222"/></svg>

<!-- 60_taskbar.html -->
<div class="a" style="left:1044px;top:734px;width:117px;height:23px;border:1px solid;border-color:#a0a0a0 #fff #fff #a0a0a0"></div>
<div class="t" style="letter-spacing:-0.32px;left:1048px;top:740px;font-size:12px">Sim Time: 100,000 ps</div>
<div class="a" style="left:1162px;top:734px;width:1px;height:23px;background:#d8d8d8"></div>
<div class="t" style="letter-spacing:-0.40px;left:1170px;top:738px;font-size:12px">Ln 35 Col 1</div>
<div class="a" style="left:1232px;top:734px;width:1px;height:23px;background:#d8d8d8"></div>
<div class="t" style="letter-spacing:-0.20px;left:1240px;top:738px;font-size:12px">Verilog</div>
<div class="a" style="left:0;top:759px;width:1280px;height:1px;background:#fff"></div>
<div class="a" style="left:0;top:760px;width:1280px;height:40px;background:linear-gradient(90deg,#7e93ad 0,#8399b5 40px,#a7bfdb 82px,#a8c0dc 1040px,#8a9fb9 1090px,#7d92ac 1180px,#778ba5 1280px);border-top:1px solid #28303c"></div>
<div class="a" style="left:0;top:761px;width:1280px;height:1px;background:rgba(255,255,255,.35)"></div>
<svg style="left:8px;top:761px" width="38" height="38" viewBox="0 0 38 38"><defs><radialGradient id="gorb" cx=".5" cy=".95" r=".9"><stop offset="0" stop-color="#30c8f0"/><stop offset=".35" stop-color="#1870b8"/><stop offset=".7" stop-color="#164880"/><stop offset="1" stop-color="#3a6898"/></radialGradient><linearGradient id="gorb2" x1="0" y1="0" x2="0" y2="1"><stop offset="0" stop-color="#fff" stop-opacity=".75"/><stop offset="1" stop-color="#fff" stop-opacity=".1"/></linearGradient></defs><circle cx="19" cy="19" r="18" fill="url(#gorb)" stroke="#2a4a78" stroke-width="1"/><path d="M2.500 16a16.500 16.500 0 0 1 33 0c-8 4.500-25 4.500-33 0z" fill="url(#gorb2)" opacity=".6"/><path d="M12.300 8.500c2.800-1.600 5.600-1.400 8 .3l-1.900 8.200c-2.500-1.600-5.300-1.800-8-.3z" fill="#f0602c"/><path d="M21.600 9.600c2.600 1.500 5.400 1.600 8 0l-1.900 8.200c-2.600 1.600-5.400 1.500-8 0z" fill="#90c840"/><path d="M9.800 18.300c2.700-1.500 5.500-1.300 8 .3l-1.900 8c-2.500-1.600-5.300-1.800-8-.3z" fill="#38a8ec"/><path d="M19.200 19.400c2.600 1.500 5.400 1.600 8 0l-1.900 8c-2.600 1.600-5.400 1.500-8 0z" fill="#f8c430"/></svg>
<svg style="left:73px;top:766px" width="33" height="31" viewBox="0 0 33 31"><path d="M1 4h9.500l1.500 2h5l1.500 2H31v19H1z" fill="#f8e6a8" stroke="#d8b45c" stroke-width="1"/><rect x="2" y="2.300" width="8" height="2.800" fill="#fff" stroke="#d8b45c" stroke-width=".6"/><rect x="3.500" y="2.300" width="3.500" height="2.400" fill="#28b838"/><rect x="11" y="4.300" width="9" height="2.800" fill="#fff" stroke="#d8b45c" stroke-width=".6"/><rect x="12" y="4.300" width="3.500" height="2.400" fill="#e02828"/><rect x="19" y="6.300" width="10" height="2.800" fill="#fff" stroke="#d8b45c" stroke-width=".6"/><rect x="20" y="6.300" width="3.500" height="2.400" fill="#2890e8"/><path d="M1 9.500h17l1.500 1.500H31.500v16H1z" fill="#f9e9b0" stroke="#d8b45c" stroke-width="1"/><path d="M4.800 30v-9.500c0-2 1-3 3-3h14.500c2 0 3 1 3 3V30h-6v-6.500H10.800V30z" fill="#a4d8f4" fill-opacity=".85" stroke="#4ea4dc" stroke-width="1.200"/><path d="M7 20.500h16" stroke="#fff" stroke-width="1.600" opacity=".7"/></svg>
<svg style="left:135px;top:764px" width="33" height="32" viewBox="0 0 33 32"><defs><radialGradient id="gff" cx=".45" cy=".25" r=".75"><stop offset="0" stop-color="#c8f0fc"/><stop offset=".35" stop-color="#48a8e0"/><stop offset=".75" stop-color="#0c3c94"/><stop offset="1" stop-color="#082868"/></radialGradient><linearGradient id="gfx" x1="0" y1="0" x2="1" y2="1"><stop offset="0" stop-color="#f07818"/><stop offset=".6" stop-color="#e85808"/><stop offset="1" stop-color="#c83c04"/></linearGradient><linearGradient id="gft" x1="0" y1="0" x2="0" y2="1"><stop offset="0" stop-color="#f8e038"/><stop offset=".5" stop-color="#f8a820"/><stop offset="1" stop-color="#e86810"/></linearGradient></defs><circle cx="16.400" cy="15.800" r="15" fill="url(#gfx)"/><circle cx="18.500" cy="12" r="11" fill="url(#gff)"/><path d="M25.500 3.500c5 3.500 7.500 10 5 16.500-2 5.500-7 9.500-13 10.500 5-2 9-6 9.500-12 .4-4.500-.5-8-2-10.500-1-1.500-.5-3 .5-4.500z" fill="url(#gft)"/><path d="M3 4.200l4.200 3.300C8.600 5.800 10.600 5 12.600 4.800c-.8 1.600-1 3-.4 4.200 1.400-.2 3.200.2 4.400 1.200-1.600.6-2.600 1.400-3.200 2.600-1.600.8-2.400 2.200-2.200 3.800.4 2.400 2.800 4 5.400 3.400 1.400-.3 2.400-1 3.200-2-.2 3.500-2.800 5.500-6.300 5.500L4 22 1.500 12z" fill="url(#gfx)"/></svg>
<div class="a" style="left:183px;top:761px;width:60px;height:39px;border:1px solid #36404e;border-bottom:none;border-radius:3px 3px 0 0;background:linear-gradient(135deg,#d4e0f0,#b8cce4 50%,#a8c0dc);box-shadow:inset 0 0 0 1px rgba(255,255,255,.75)"></div>
<svg style="left:197px;top:765px" width="33" height="30" viewBox="0 0 33 30"><path d="M.3.800h18.600L32 14.500H14z" fill="#dcdc50"/><path d="M14 14.500h18L18.900 28.700H.3z" fill="#9a9a14"/></svg>
<div class="a" style="left:245px;top:761px;width:60px;height:39px;border:1px solid #36404e;border-bottom:none;border-radius:3px 3px 0 0;background:linear-gradient(135deg,#eaf0f8,#d4e0f0 50%,#c4d4ea);box-shadow:inset 0 0 0 1px rgba(255,255,255,.85)"></div>
<svg style="left:259px;top:764px" width="33" height="33" viewBox="0 0 33 33"><defs><linearGradient id="gis" x1="0" y1="0" x2="1" y2="1"><stop offset="0" stop-color="#3a78d0"/><stop offset="1" stop-color="#a8c8f0"/></linearGradient></defs><rect x="1" y="1" width="29" height="30" rx="2" fill="url(#gis)" stroke="#c8a890" stroke-width=".8"/><path d="M4 10h5V6.500h7M6 19h6v-5h7v-4h7" fill="none" stroke="#d0e4fa" stroke-width="2" opacity=".8"/><rect x="1.500" y="24" width="18" height="8" fill="#d8e6f6" opacity=".8"/><circle cx="23.800" cy="20.500" r="7.600" fill="#d4d4d4" fill-opacity=".85" stroke="#888" stroke-width="1.400"/><path d="M23.800 14v13M18 17.500l11.600 6M29.600 17.500l-11.600 6" stroke="#555" stroke-width=".9"/><ellipse cx="23.800" cy="20.500" rx="2.300" ry="3.200" fill="#2a2a2a"/><path d="M29.500 27.500l2.800 3" stroke="#d02020" stroke-width="2"/><text x="1.200" y="31.300" font-family="Liberation Sans,sans-serif" font-weight="bold" font-size="8.500" letter-spacing=".6" fill="#0c2868">ISim</text></svg>
<svg style="left:1103px;top:778px" width="9" height="6" viewBox="0 0 9 6"><path d="M0 5.500h9L4.500 0z" fill="#fff"/></svg>
<svg style="left:1123px;top:772px" width="16" height="17" viewBox="0 0 16 17"><path d="M1.500 1v15" stroke="#fff" stroke-width="1.600"/><path d="M3 2.200c3-1.500 5 1.500 8 0 1-.5 2.500-.5 4 .5-1 1.500-2 4-2 6-2-1-3.500-.5-5 0s-3.500 1-5 0z" fill="none" stroke="#fff" stroke-width="1.300"/></svg>
<svg style="left:1147px;top:772px" width="17" height="17" viewBox="0 0 17 17"><rect x="4.500" y="4.500" width="11" height="8.500" fill="#5a6a80" stroke="#fff" stroke-width="1.300"/><path d="M7 16h7M10.500 13v3" stroke="#fff" stroke-width="1.300"/><path d="M2 1v3.500h3.500V1M3.700 4.500V9" stroke="#fff" stroke-width="1.200" fill="none"/></svg>
<svg style="left:1171px;top:773px" width="17" height="15" viewBox="0 0 17 15"><path d="M1 5h3l4-4v13l-4-4H1z" fill="#e8e8e8" stroke="#fff" stroke-width="1"/><path d="M10.500 4.500c1.300 1.500 1.300 4.500 0 6M12.800 2.500c2.300 2.600 2.300 7.400 0 10" fill="none" stroke="#fff" stroke-width="1.100"/></svg>
<div class="t" style="letter-spacing:-0.35px;left:1208px;top:766px;font-size:12px;color:#fff">4:14 PM</div>
<div class="t" style="letter-spacing:-0.10px;left:1204px;top:783px;font-size:12px;color:#fff">11/7/2012</div>
<div class="a" style="left:1266px;top:762px;width:14px;height:38px;border:1px solid #4a5668;border-right:none;background:linear-gradient(90deg,#8a9cb4,#6a7c94);box-shadow:inset 1px 1px 0 rgba(255,255,255,.35)"></div>

</body></html>
